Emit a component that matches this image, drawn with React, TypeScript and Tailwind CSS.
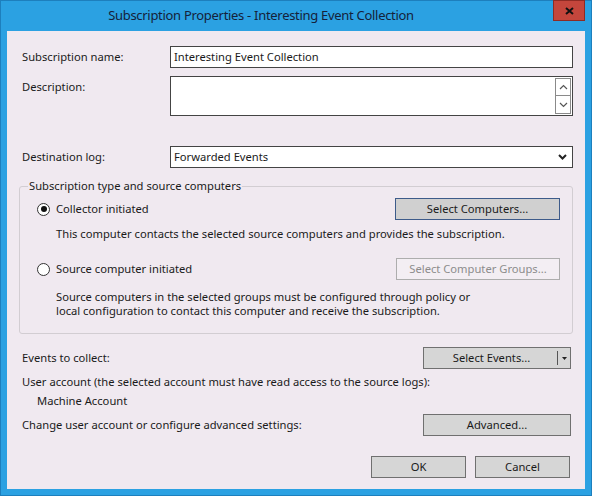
import React from "react";

const font = { fontFamily: '"Noto Sans", "Open Sans", sans-serif' };

function Radio({ checked }: { checked?: boolean }) {
  return (
    <span className="flex h-[13px] w-[13px] items-center justify-center rounded-full border border-[#333333] bg-white">
      {checked ? <span className="h-[6px] w-[6px] rounded-full bg-[#111111]" /> : null}
    </span>
  );
}

function Button({ children, className = "" }: { children: React.ReactNode; className?: string }) {
  return (
    <div
      className={`flex h-[22px] items-center justify-center border border-[#707070] bg-[#d6d6d6] text-[#1a1a1a] ${className}`}
    >
      {children}
    </div>
  );
}

function Chevron({ dir }: { dir: "up" | "down" }) {
  return (
    <svg width="9" height="6" viewBox="0 0 9 6" aria-hidden="true">
      <path
        d={dir === "up" ? "M1 5 L4.5 1.5 L8 5" : "M1 1 L4.5 4.5 L8 1"}
        fill="none"
        stroke="#555"
        strokeWidth="1.2"
      />
    </svg>
  );
}

export default function App() {
  return (
    <div
      className="flex h-[496px] w-[592px] flex-col border border-[#1d7fbd] bg-[#2ba1e2] text-[11.2px] text-[#1a1a1a]"
      style={font}
    >
      <div className="relative flex h-[30px] shrink-0 items-center justify-center pb-[1px] pr-[70px]">
        <span className="text-[13px] tracking-[-0.3px] text-[#15213a]">
          Subscription Properties - Interesting Event Collection
        </span>
        <div className="absolute right-[6px] top-[-1px] flex h-[21px] w-[32px] items-center justify-center border border-[#8e2b24] bg-[#c4463c]">
          <svg width="9" height="8" viewBox="0 0 9 8" aria-hidden="true">
            <path d="M1 1 L8 7 M8 1 L1 7" stroke="#111" strokeWidth="2" />
          </svg>
        </div>
      </div>

      <div className="mx-[6px] mb-[6px] flex flex-1 flex-col bg-[#f0e9f0] pl-[15px] pr-[12px] pt-[15px]">
        <div className="flex h-[22px] items-center">
          <span className="w-[148px] shrink-0">Subscription name:</span>
          <div className="flex h-full flex-1 items-center border border-[#444] bg-white pl-[3px]">
            Interesting Event Collection
          </div>
        </div>

        <div className="mt-[8px] flex h-[40px]">
          <span className="w-[148px] shrink-0 pt-[3px]">Description:</span>
          <div className="flex h-full flex-1 justify-end border border-[#444] bg-white pr-[1px] pt-[1px]">
            <div className="flex flex-col">
              <div className="flex h-[18px] w-[16px] items-center justify-center border border-[#8a8a8a] bg-white">
                <Chevron dir="up" />
              </div>
              <div className="flex h-[18px] w-[16px] items-center justify-center border border-t-0 border-[#8a8a8a] bg-white">
                <Chevron dir="down" />
              </div>
            </div>
          </div>
        </div>

        <div className="mt-[30px] flex h-[22px] items-center">
          <span className="w-[148px] shrink-0">Destination log:</span>
          <div className="flex h-full flex-1 items-center justify-between border border-[#444] bg-white pl-[3px] pr-[5px]">
            <span>Forwarded Events</span>
            <svg width="9" height="6" viewBox="0 0 9 6" aria-hidden="true">
              <path d="M1 1 L4.5 4.5 L8 1" fill="none" stroke="#222" strokeWidth="2" />
            </svg>
          </div>
        </div>

        <fieldset className="-ml-[3px] mt-[10px] rounded-[3px] border border-[#d2cdd2] pb-[15px] pl-[17px] pr-[12px]">
          <legend className="-ml-[9px] px-[1px] leading-[16px]">Subscription type and source computers</legend>
          <div className="mt-[4px] flex h-[22px] items-center">
            <Radio checked />
            <span className="ml-[6px] flex-1">Collector initiated</span>
            <div className="flex h-[22px] w-[165px] items-center justify-center border border-[#3d5b8a] bg-[#d0d0d0]">
              Select Computers...
            </div>
          </div>
          <p className="ml-[19px] mt-[6px] leading-[16px]">
            This computer contacts the selected source computers and provides the subscription.
          </p>
          <div className="mt-[16px] flex h-[22px] items-center">
            <Radio />
            <span className="ml-[6px] flex-1">Source computer initiated</span>
            <div className="flex h-[22px] w-[164px] items-center justify-center border border-[#adadad] bg-[#f3eef3] text-[#8c8c8c]">
              Select Computer Groups...
            </div>
          </div>
          <p className="ml-[19px] mt-[10px] leading-[14px]">
            Source computers in the selected groups must be configured through policy or
            <br />
            local configuration to contact this computer and receive the subscription.
          </p>
        </fieldset>

        <div className="mt-[13px] flex h-[22px] items-center justify-between pr-[2px]">
          <span>Events to collect:</span>
          <div className="flex h-[22px] w-[148px] border border-[#707070] bg-[#d6d6d6]">
            <span className="flex flex-1 items-center justify-center pl-[2px]">Select Events...</span>
            <span className="my-[3px] w-px bg-[#555]" />
            <span className="flex w-[12px] items-center justify-center">
              <svg width="5" height="3" viewBox="0 0 5 3" aria-hidden="true">
                <path d="M0 0 H5 L2.5 3 Z" fill="#222" />
              </svg>
            </span>
          </div>
        </div>
        <p className="mt-[5px] leading-[16px]">User account (the selected account must have read access to the source logs):</p>
        <p className="ml-[15px] mt-[3px] leading-[16px]">Machine Account</p>

        <div className="mt-[5px] flex h-[22px] items-center justify-between pr-[2px]">
          <span>Change user account or configure advanced settings:</span>
          <Button className="w-[148px]">Advanced...</Button>
        </div>

        <div className="mt-[20px] flex justify-end gap-[9px] pr-[3px]">
          <Button className="w-[95px]">OK</Button>
          <Button className="w-[95px]">Cancel</Button>
        </div>
      </div>
    </div>
  );
}
